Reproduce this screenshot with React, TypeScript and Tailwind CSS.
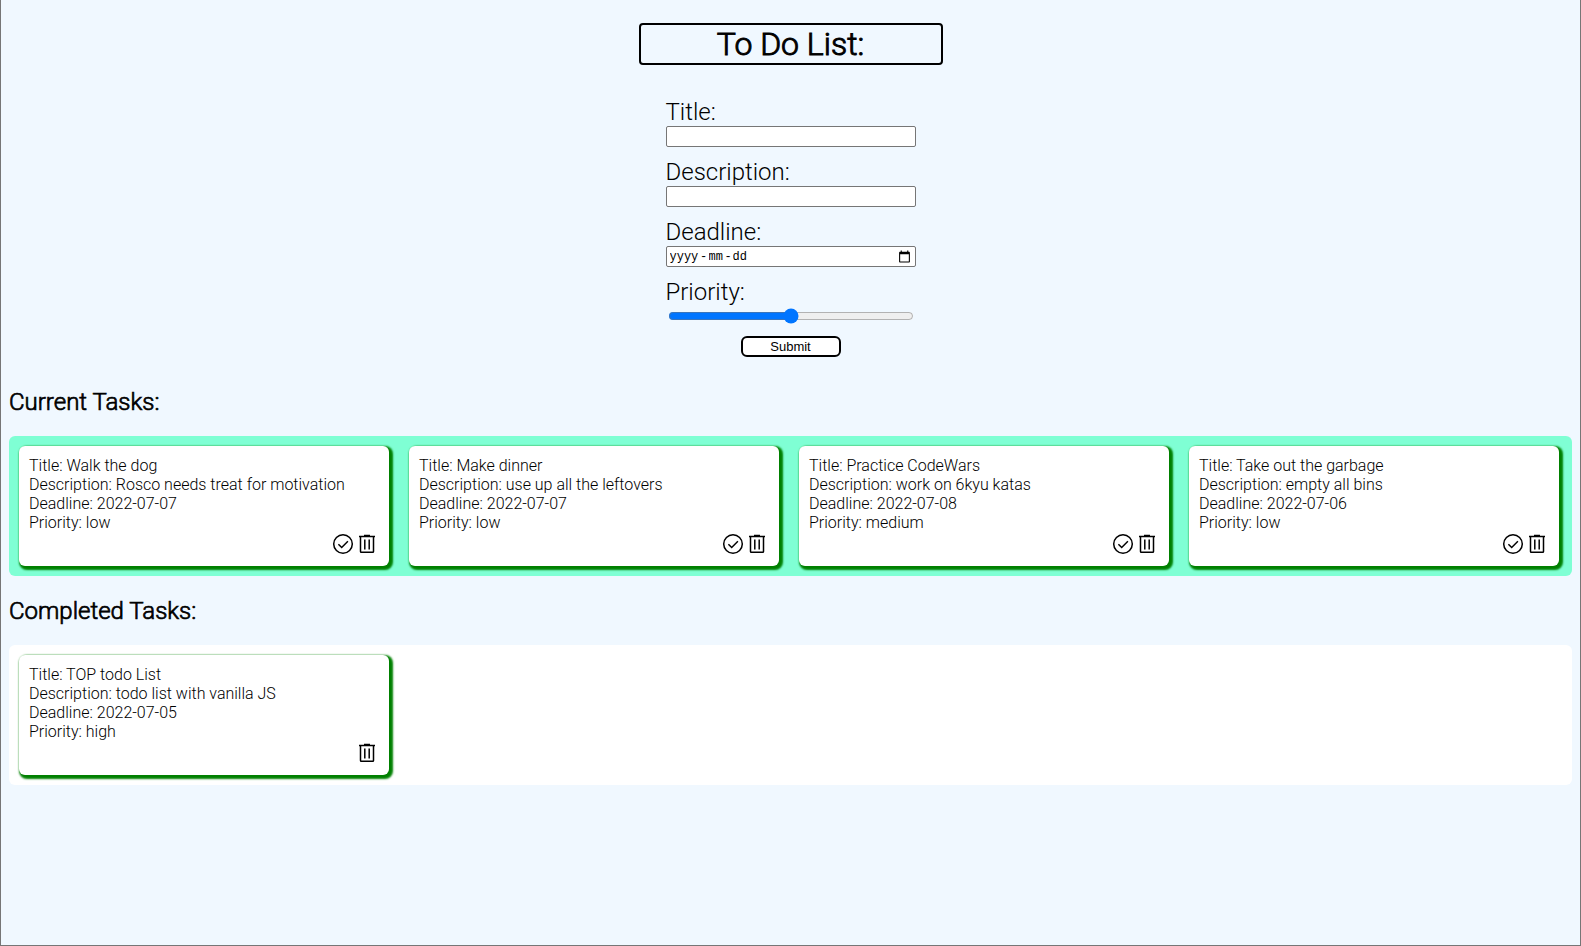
import { useState } from "react";

type Task = {
  id: number;
  title: string;
  description: string;
  deadline: string;
  priority: string;
};

const currentTasks: Task[] = [
  { id: 1, title: "Walk the dog", description: "Rosco needs treat for motivation", deadline: "2022-07-07", priority: "low" },
  { id: 2, title: "Make dinner", description: "use up all the leftovers", deadline: "2022-07-07", priority: "low" },
  { id: 3, title: "Practice CodeWars", description: "work on 6kyu katas", deadline: "2022-07-08", priority: "medium" },
  { id: 4, title: "Take out the garbage", description: "empty all bins", deadline: "2022-07-06", priority: "low" },
];

const completedTasks: Task[] = [
  { id: 5, title: "TOP todo List", description: "todo list with vanilla JS", deadline: "2022-07-05", priority: "high" },
];

function CheckIcon() {
  return (
    <svg viewBox="0 0 24 24" className="size-6" fill="none" stroke="black" strokeWidth="1.5" aria-hidden="true">
      <circle cx="12" cy="12" r="9.3" />
      <path d="M7.4 12.2l3.3 3.3 6.2-6.3" />
    </svg>
  );
}

function TrashIcon() {
  return (
    <svg viewBox="0 0 24 24" className="size-6" fill="none" stroke="black" strokeWidth="1.5" aria-hidden="true">
      <path d="M4 4.5h16M9 3.6h6M5.500 4.500v15q0 .8.8.8h11.400q.8 0 .8-.8v-15M9.800 7.500v10M14.200 7.500v10" />
    </svg>
  );
}

function CalendarIcon() {
  return (
    <svg viewBox="0 0 24 24" className="size-[13px]" fill="black" aria-hidden="true">
      <path d="M20 3h-1V1h-2v2H7V1H5v2H4c-1.100 0-2 .9-2 2v16c0 1.100.9 2 2 2h16c1.100 0 2-.9 2-2V5c0-1.100-.9-2-2-2zm0 18H4V8h16v13z" />
    </svg>
  );
}

function TaskCard({ task, onDelete, onComplete }: { task: Task; onDelete: () => void; onComplete?: () => void }) {
  return (
    <article className="m-2.5 flex h-[120px] flex-col rounded-md bg-white p-2.5 shadow-[2px_2px_2px_2px_green]">
      <p>Title: {task.title}</p>
      <p>Description: {task.description}</p>
      <p>Deadline: {task.deadline}</p>
      <p>Priority: {task.priority}</p>
      <div className="flex justify-end">
        {onComplete && (
          <button type="button" aria-label="Complete task" onClick={onComplete}>
            <CheckIcon />
          </button>
        )}
        <button type="button" aria-label="Delete task" onClick={onDelete}>
          <TrashIcon />
        </button>
      </div>
    </article>
  );
}

const labelClass = "text-2xl leading-7";
const inputClass = "h-[21px] w-full rounded-xs border border-[#767676] bg-white px-0.5 text-[13px]";
const headingClass = "mt-[21px] mb-[19px] text-2xl/[29px] [-webkit-text-stroke:0.03em_black]";
const listClass = "grid grid-cols-[repeat(auto-fill,390px)] rounded-md";

export default function App() {
  const [current, setCurrent] = useState(currentTasks);
  const [completed, setCompleted] = useState(completedTasks);

  const complete = (task: Task) => {
    setCurrent(current.filter((t) => t.id !== task.id));
    setCompleted([...completed, task]);
  };

  return (
    <div className="min-h-screen border-x border-b border-[#767676] bg-[#f0f8ff] px-2 font-['Roboto',sans-serif] text-base/[19px] font-light text-black">
      <header className="flex justify-center pt-[23px]">
        <h1 className="w-[304px] rounded-sm border-2 border-black text-center text-[32px]/[38px] [-webkit-text-stroke:0.03em_black]">
          To Do List:
        </h1>
      </header>

      <form className="mx-auto mt-[33px] mb-[31px] flex w-[250px] flex-col gap-[11px]" onSubmit={(e) => e.preventDefault()}>
        <div className="flex flex-col">
          <label htmlFor="title" className={labelClass}>Title:</label>
          <input id="title" type="text" className={inputClass} />
        </div>
        <div className="flex flex-col">
          <label htmlFor="description" className={labelClass}>Description:</label>
          <input id="description" type="text" className={inputClass} />
        </div>
        <fieldset className="flex flex-col">
          <label htmlFor="year" className={labelClass}>Deadline:</label>
          <div className="flex h-[21px] items-center rounded-xs border border-[#767676] bg-white pt-0.5 pr-1 pl-[3px] font-['Liberation_Mono',monospace] text-[12px]/[15px] font-normal">
            <input id="year" type="text" placeholder="yyyy" maxLength={4} className="w-[29px] placeholder:text-black" />
            <span className="w-[10px] text-center">-</span>
            <input type="text" aria-label="Month" placeholder="mm" maxLength={2} className="w-[15px] placeholder:text-black" />
            <span className="w-[9px] text-center">-</span>
            <input type="text" aria-label="Day" placeholder="dd" maxLength={2} className="w-[15px] placeholder:text-black" />
            <button type="button" aria-label="Open calendar" className="ml-auto pb-0.5">
              <CalendarIcon />
            </button>
          </div>
        </fieldset>
        <div className="flex flex-col">
          <label htmlFor="priority" className={labelClass}>Priority:</label>
          <input id="priority" type="range" min={1} max={3} defaultValue={2} className="mx-0.5 mt-0.5 mb-px h-4" />
        </div>
        <button
          type="submit"
          className="h-[21px] w-[100px] self-center rounded-md border-2 border-black bg-white font-['Liberation_Sans',sans-serif] text-[13px]/[15px] font-normal"
        >
          Submit
        </button>
      </form>

      <main>
        <h2 className={headingClass}>Current Tasks:</h2>
        <section className={`${listClass} bg-[#7fffd4]`}>
          {current.map((task) => (
            <TaskCard
              key={task.id}
              task={task}
              onComplete={() => complete(task)}
              onDelete={() => setCurrent(current.filter((t) => t.id !== task.id))}
            />
          ))}
        </section>

        <h2 className={headingClass}>Completed Tasks:</h2>
        <section className={`${listClass} bg-white`}>
          {completed.map((task) => (
            <TaskCard key={task.id} task={task} onDelete={() => setCompleted(completed.filter((t) => t.id !== task.id))} />
          ))}
        </section>
      </main>
    </div>
  );
}
